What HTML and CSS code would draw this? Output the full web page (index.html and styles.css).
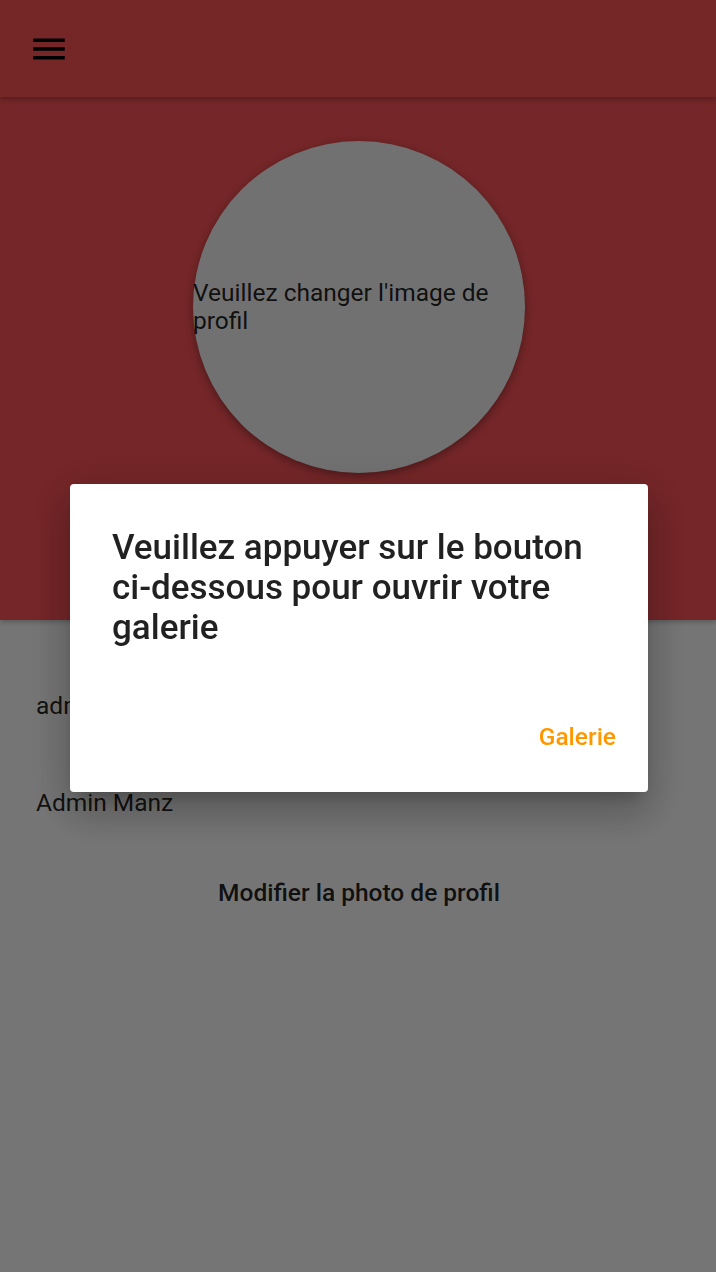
FILE: index.html
```html
<!DOCTYPE html>
<html lang="fr">
<head>
<meta charset="utf-8">
<title>Profil</title>
<link rel="stylesheet" href="styles.css">
</head>
<body>
<div class="screen">
  <header class="appbar">
    <button class="menu-btn" aria-label="Menu">
      <svg viewBox="0 0 24 24" width="42" height="42"><path d="M3 18h18v-2H3v2zm0-5h18v-2H3v2zm0-7v2h18V6H3z" fill="#000"/></svg>
    </button>
  </header>
  <section class="hero">
    <div class="avatar">
      <span class="avatar-text">Veuillez changer l'image de profil</span>
    </div>
  </section>
  <main class="content">
    <div class="field">admin@manz.com</div>
    <div class="field">Admin Manz</div>
    <div class="change-btn">Modifier la photo de profil</div>
  </main>
</div>
<div class="scrim">
  <div class="dialog" role="dialog">
    <h2 class="dialog-title">Veuillez appuyer sur le bouton ci-dessous pour ouvrir votre galerie</h2>
    <div class="dialog-actions">
      <button class="text-btn">Galerie</button>
    </div>
  </div>
</div>
</body>
</html>
```

FILE: styles.css
```css
* { box-sizing: border-box; }
html, body {
  margin: 0;
  padding: 0;
  width: 716px;
  height: 1272px;
  overflow: hidden;
  background: #ffffff;
  font-family: Roboto, "Noto Sans", "Liberation Sans", sans-serif;
}
.screen {
  width: 716px;
  height: 1272px;
  display: flex;
  flex-direction: column;
  background: #ffffff;
}
.appbar {
  height: 97px;
  flex: none;
  background: #ff5558;
  display: flex;
  align-items: center;
  padding-left: 28px;
  position: relative;
  z-index: 2;
  box-shadow: 0 2px 5px rgba(0, 0, 0, 0.28);
}
.menu-btn {
  border: 0;
  background: none;
  padding: 0;
  width: 42px;
  height: 42px;
  display: block;
}
.menu-btn svg { display: block; }
.hero {
  height: 523px;
  flex: none;
  background: #fc5357;
  display: flex;
  justify-content: center;
  padding-top: 44px;
  padding-left: 2px;
  position: relative;
  z-index: 1;
  box-shadow: 0 2px 5px rgba(0, 0, 0, 0.25);
}
.avatar {
  width: 332px;
  height: 332px;
  border-radius: 50%;
  background: #f7f7f7;
  display: flex;
  align-items: center;
  box-shadow: 0 3px 8px rgba(0, 0, 0, 0.35);
}
.avatar-text {
  display: block;
  width: 100%;
  font-size: 24.5px;
  line-height: 28px;
  color: rgba(0, 0, 0, 0.87);
}
.content {
  display: flex;
  flex-direction: column;
  padding: 72px 36px 0;
}
.field {
  font-size: 24.5px;
  line-height: 28px;
  color: rgba(0, 0, 0, 0.87);
  margin-bottom: 69px;
}
.change-btn {
  align-self: center;
  margin-top: -7px;
  font-size: 24.5px;
  line-height: 28px;
  font-weight: 500;
  color: rgba(0, 0, 0, 0.87);
  padding-left: 2px;
}
.scrim {
  position: fixed;
  inset: 0;
  background: rgba(0, 0, 0, 0.54);
  display: flex;
  align-items: center;
  justify-content: center;
  padding-left: 2px;
  z-index: 10;
}
.dialog {
  width: 578px;
  height: 308px;
  margin-top: 4px;
  background: #ffffff;
  border-radius: 4px;
  box-shadow: 0 11px 15px -7px rgba(0, 0, 0, 0.2), 0 24px 38px 3px rgba(0, 0, 0, 0.14), 0 9px 46px 8px rgba(0, 0, 0, 0.12);
  display: flex;
  flex-direction: column;
}
.dialog-title {
  margin: 0;
  padding: 44px 42px 0;
  font-size: 35px;
  line-height: 40px;
  font-weight: 500;
  color: rgba(0, 0, 0, 0.87);
}
.dialog-actions {
  display: flex;
  justify-content: flex-end;
  padding: 75px 32px 0 0;
}
.text-btn {
  border: 0;
  background: none;
  padding: 0;
  font-family: inherit;
  font-size: 24.5px;
  line-height: 28px;
  font-weight: 500;
  color: #ff9800;
}
```
